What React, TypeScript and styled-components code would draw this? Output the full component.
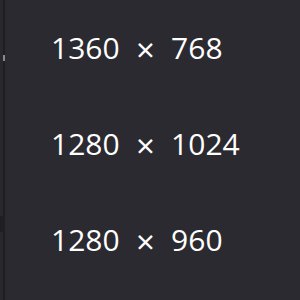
import React from "react";
import styled, { createGlobalStyle } from "styled-components";

const Global = createGlobalStyle`
  html, body { margin: 0; padding: 0; background: #2b2a30; }
  #root { width: 300px; height: 300px; }
`;

const Frame = styled.div`
  display: flex;
  width: 300px;
  height: 300px;
  overflow: hidden;
  background: #2b2a30;
`;

const Edge = styled.div`
  width: 3px;
  background: #29282d;
  display: flex;
  flex-direction: column;
`;

const EdgeMark = styled.div<{ $top: number; $h: number; $c: string }>`
  margin-top: ${(p) => p.$top}px;
  height: ${(p) => p.$h}px;
  background: ${(p) => p.$c};
`;

const Divider = styled.div`
  width: 2px;
  background: #1f1e23;
  display: flex;
  flex-direction: column;
`;

const List = styled.div`
  flex: 1;
  display: flex;
  flex-direction: column;
`;

const Item = styled.div`
  height: 96px;
  display: flex;
  align-items: center;
  padding-left: 46px;
`;

const Label = styled.span`
  font-family: "Open Sans", "Noto Sans", sans-serif;
  font-size: 30px;
  line-height: 40px;
  color: #ffffff;
  white-space: pre;
  word-spacing: 8.5px;
`;

const Times = styled.span`
  font-size: 33px;
  vertical-align: -3px;
  line-height: 1;
`;

const items: [string, string][] = [
  ["1360", "768"],
  ["1280", "1024"],
  ["1280", "960"],
];

export default function App() {
  return (
    <>
      <Global />
      <Frame>
        <Edge>
          <EdgeMark $top={216} $h={16} $c="#1f1e23" />
        </Edge>
        <Divider>
          <EdgeMark $top={55} $h={6} $c="#8a8990" />
        </Divider>
        <List>
          {items.map(([w, h]) => (
            <Item key={w + h}>
              <Label>
                {w} <Times>×</Times> {h}
              </Label>
            </Item>
          ))}
        </List>
      </Frame>
    </>
  );
}
